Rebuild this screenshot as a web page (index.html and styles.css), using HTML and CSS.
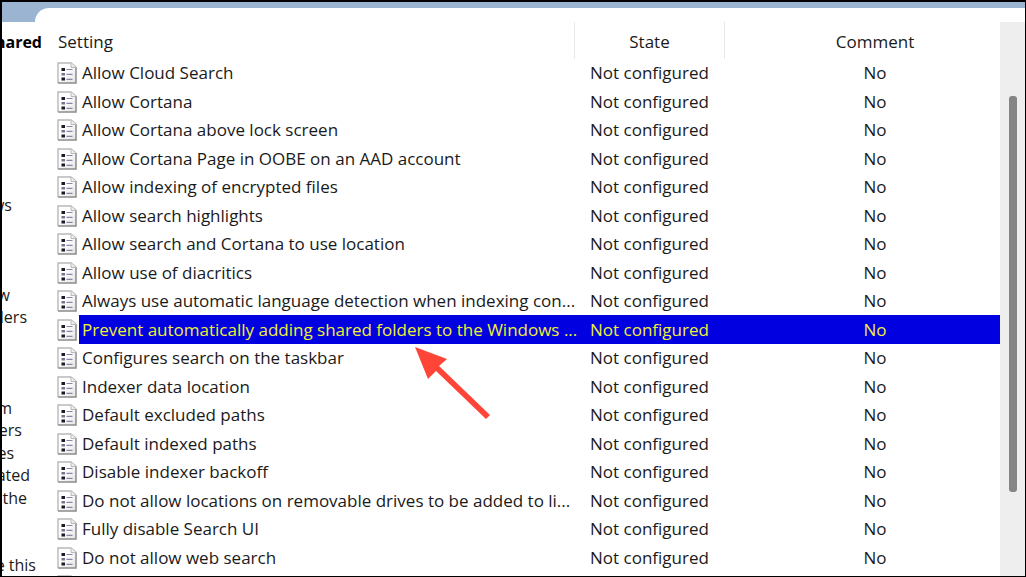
FILE: index.html
```
<!DOCTYPE html>
<html lang="en">
  <head>
    <meta charset="UTF-8" />
    <meta name="viewport" content="width=device-width, initial-scale=1.0" />

    <title>Search policies</title>

    <link rel="stylesheet" href="styles.css">
  </head>

  <body>
    <div class="window">
      <div class="titlebar"></div>

      <div class="content">
        <aside class="description">
          <h2 class="line end-40">hared</h2>
          <div class="group supported">
            <p class="line end-10">ws</p>
          </div>
          <div class="group">
            <p class="line end-8">w</p>
            <p class="line end-25">ders</p>
          </div>
          <div class="group">
            <p class="line end-10">m</p>
            <p class="line end-20">ers</p>
            <p class="line end-12">es</p>
            <p class="line end-28">ated</p>
            <p class="line end-25">the</p>
          </div>
          <div class="group last">
            <p class="line end-34">e this</p>
          </div>
        </aside>

        <main class="list">
          <table class="settings">
            <colgroup>
              <col class="col-icon" />
              <col />
              <col class="col-state" />
              <col class="col-comment" />
            </colgroup>
            <thead>
              <tr>
                <th class="setting" colspan="2">Setting</th>
                <th class="state">State</th>
                <th class="comment">Comment</th>
              </tr>
            </thead>
            <tbody id="rows"></tbody>
          </table>
        </main>

        <div class="scrollbar">
          <div class="thumb"></div>
        </div>
      </div>

      <svg class="arrow" width="78" height="74" viewBox="0 0 78 74">
        <path d="M0 0 32 12 24 19 75 68 71 72 21 24 13 32Z" fill="#ff4438" />
      </svg>
    </div>

    <svg class="defs" width="0" height="0">
      <defs>
        <linearGradient id="paper" x1="0" y1="0" x2="1" y2="1">
          <stop offset="0.4" stop-color="#ffffff" />
          <stop offset="1" stop-color="#e2e2e2" />
        </linearGradient>
        <symbol id="policy" viewBox="0 0 20 22">
          <path d="M1 1H14L19 6V21H1Z" fill="url(#paper)" />
          <path d="M1 21V1H14L19 5" fill="none" stroke="#b8b8b8" stroke-width="1.4" />
          <path d="M19 5V21H1" fill="none" stroke="#8c8c8c" stroke-width="1.5" />
          <path d="M14 1V5.500H19" fill="#eeeeee" stroke="#b8b8b8" />
          <path d="M4.500 6h3.500v3H4.500zM4.500 15.500h3.500v3H4.500z" fill="#1c1a24" />
          <path d="M4.500 11h3.500v2.500H4.500z" fill="#77748f" />
          <path d="M9.500 7.500h6M9.500 12.300h6M9.500 17.300h6" stroke="#8986ab" stroke-width="1.2" />
        </symbol>
      </defs>
    </svg>

    <script>
      const SELECTED = 9;
      const SETTINGS = [
        "Allow Cloud Search",
        "Allow Cortana",
        "Allow Cortana above lock screen",
        "Allow Cortana Page in OOBE on an AAD account",
        "Allow indexing of encrypted files",
        "Allow search highlights",
        "Allow search and Cortana to use location",
        "Allow use of diacritics",
        "Always use automatic language detection when indexing con...",
        "Prevent automatically adding shared folders to the Windows ...",
        "Configures search on the taskbar",
        "Indexer data location",
        "Default excluded paths",
        "Default indexed paths",
        "Disable indexer backoff",
        "Do not allow locations on removable drives to be added to li...",
        "Fully disable Search UI",
        "Do not allow web search",
        "",
      ];

      document.getElementById("rows").innerHTML = SETTINGS.map(
        (name, i) => `
          <tr class="${i === SELECTED ? "selected" : ""}">
            <td class="icon"><svg width="20" height="22"><use href="#policy" /></svg></td>
            <td class="name">${name}</td>
            <td class="state">${name && "Not configured"}</td>
            <td class="comment">${name && "No"}</td>
          </tr>`
      ).join("");
    </script>
  </body>
</html>
```
FILE: styles.css
```
*,
*::before,
*::after {
  box-sizing: border-box;
}

body {
  margin: 0;
  background-color: white;
  color: #1a1a1a;
  font-family: "Open Sans", "Noto Sans", sans-serif;
  font-size: 17px;
}

.window {
  position: relative;
  display: flex;
  flex-direction: column;
  height: 100vh;
  overflow: hidden;
  border: 1px solid black;
  border-top-width: 2px;
  border-left-width: 2px;
}

.titlebar {
  flex: none;
  height: 20px;
  padding: 6px 0 0 33px;
  background-color: #9ab4d1;
}

.titlebar::before {
  content: "";
  display: block;
  height: 14px;
  background-color: white;
  border-top-left-radius: 14px;
}

.content {
  flex: 1;
  display: flex;
  min-height: 0;
}

.description {
  flex: none;
  width: 48px;
  padding-top: 9px;
  font-size: 16px;
  line-height: 22px;
}

.line {
  display: flex;
  justify-content: flex-end;
  height: 22px;
  margin: 0;
  white-space: pre;
}

h2.line {
  color: black;
  font-size: 16px;
}

.line:nth-child(even) {
  height: 23px;
}

.group {
  margin-top: 68px;
}

.supported {
  margin-top: 141px;
}

.last {
  margin-top: 45px;
}

.end-8 { width: 8px; }
.end-10 { width: 10px; }
.end-12 { width: 12px; }
.end-20 { width: 20px; }
.end-25 { width: 25px; }
.end-28 { width: 28px; }
.end-34 { width: 34px; }
.end-40 { width: 40px; }

.list {
  flex: 1;
  min-width: 0;
}

.settings {
  width: 100%;
  table-layout: fixed;
  border-collapse: separate;
  border-spacing: 0;
  line-height: 22px;
}

.col-icon {
  width: 29px;
}

.col-state {
  width: 151px;
}

.col-comment {
  width: 275px;
}

th,
td {
  padding: 0;
  font-weight: normal;
  white-space: nowrap;
}

th {
  height: 37px;
  padding-top: 2px;
}

tr {
  height: 28px;
}

tbody tr:nth-child(even) {
  height: 29px;
}

.setting {
  padding-left: 8px;
  text-align: left;
}

.state {
  text-align: center;
}

th.state {
  border-left: 1px solid #e8e8e8;
  border-right: 1px solid #e8e8e8;
}

.icon {
  padding-left: 7px;
}

.icon svg {
  display: block;
}

.name {
  padding-left: 3px;
}

.comment {
  padding-left: 25px;
  text-align: center;
}

.selected td:not(.icon) {
  background-color: #0000e0;
  color: #f0f032;
}

.scrollbar {
  flex: none;
  width: 25px;
  padding: 74px 8px 0 9px;
  background-color: #eeeeee;
}

.thumb {
  height: 396px;
  border-radius: 3px;
  background-color: #858585;
}

.arrow {
  position: absolute;
  top: 345px;
  left: 413px;
}

.defs {
  position: absolute;
}
```
